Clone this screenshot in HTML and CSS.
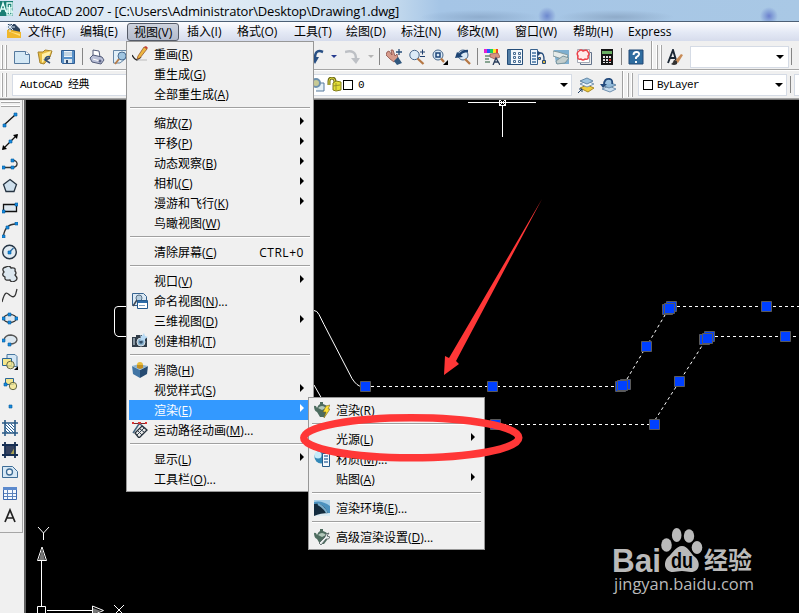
FILE: index.html
```html
<!DOCTYPE html>
<html lang="zh-CN">
<head>
<meta charset="utf-8">
<title>AutoCAD 2007</title>
<link rel="stylesheet" href="styles.css">
</head>
<body>
<div class="app">
  <header class="titlebar">
    <svg class="logo" width="14" height="16" viewBox="0 0 14 16"><path fill="#1a7f74" d="M0 0h13v15H0z"/><path d="M0 11 3 2l3 9M1 8h4M7 2h5v5H7zM7 9h5v5H7zM9.500 4v9M6 11h7" fill="none" stroke="#e6fffa" stroke-width="1.300"/></svg>
    <span class="title">AutoCAD 2007 - [C:\Users\Administrator\Desktop\Drawing1.dwg]</span>
  </header>
  <nav class="menubar">
    <svg class="doc" width="16" height="17" viewBox="0 0 16 17"><path d="M2 1h7l5 5v7H2z" fill="#2d4460"/><path d="M1 6 15 9v6L1 15z" fill="#f0b72c"/><path d="m2 8 12 3v2z" fill="#ffe07a"/><path d="M4 0v9M0 4h9M1 1l6 6M7 1 1 7" stroke="#dceaf8" fill="none"/></svg>
    <span>文件(F)</span><span>编辑(E)</span><span class="open">视图(V)</span><span>插入(I)</span><span>格式(O)</span><span>工具(T)</span><span>绘图(D)</span><span>标注(N)</span><span>修改(M)</span><span>窗口(W)</span><span>帮助(H)</span><span>Express</span>
  </nav>

  <div class="row standard">
    <div class="bar bar-main">
      <i class="grip"></i>
      <svg class="ic" viewBox="0 0 16 16"><path d="M.5 2.500h11l4 3v9H.5z" fill="#d4e8f5" stroke="#55799d"/><path d="m11.500 2.500 0 3h4" fill="#fff" stroke="#55799d"/></svg>
      <svg class="ic" viewBox="0 0 16 16"><path d="m1 3 5 0 2-2 7 1-2 6-6 7-4-1z" fill="#e7bd43" stroke="#a8842d"/><path d="m5 5 9-3-2 5-7 7z" fill="#fff0a8"/><path d="M8 11c0-3 3-4 5-3M13 14l-5-3 5-2" fill="none" stroke="#314f7a" stroke-width="1.500"/></svg>
      <svg class="ic" viewBox="0 0 16 16"><path d="M1.500 1.500h13v13h-12l-1-1z" fill="#5790c8" stroke="#315d91"/><path d="M4 2h8v6H4z" fill="#eef6fb"/><path d="M4 4h8M4 6h8" stroke="#9ab5cc"/><path d="M4 10h8v4H4z" fill="#dce7ef"/><path d="M6 11h2v3H6z" fill="#304c70"/></svg>
      <i class="sep"></i>
      <svg class="ic" viewBox="0 0 16 16"><path d="m4 1 6 1 1 6-7 1z" fill="#fff" stroke="#525b79"/><path d="m1 9 3-3 9 2 2 3-3 4-9-2z" fill="#b9bfd6" stroke="#525b79"/><path d="m4 10 7 2" stroke="#fff"/><circle cx="11" cy="12" r="1.500" fill="#5b6387"/></svg>
      <svg class="ic" viewBox="0 0 16 16"><path d="M1.500 1.500H15v7L8 14H1.500z" fill="#e2f0f8" stroke="#6787a7"/><circle cx="10" cy="7" r="4" fill="#9fc5e1" stroke="#4a6c91"/><path d="m7 10-4 5" stroke="#b77d4a" stroke-width="2"/></svg>
      <i class="covered"></i>
      <svg class="ic" viewBox="0 0 16 16"><path d="M15 3Q6-1 7 12" fill="none" stroke="#284f83" stroke-width="2.500"/><path d="M3 8h8l-4 7z" fill="#284f83"/></svg>
      <i class="drop navy"></i>
      <svg class="ic" viewBox="0 0 16 16"><path d="M0 3q11-3 11 7" fill="none" stroke="#bdc0c5" stroke-width="2.500"/><path d="m6 9 9 0-4 6z" fill="#bdc0c5"/></svg>
      <i class="drop faded"></i>
      <i class="sep"></i>
      <svg class="ic" viewBox="0 0 16 16"><path d="m1 3 2-1 3 4-1-5 2 0 2 6 2-2 1 5-4 3-4-3-4-4z" fill="#d79b8b" stroke="#8d5149" stroke-width=".8"/><path d="m8 12 4-4 4 6-5 2z" fill="#30577d"/><path d="M10 3h6M13 0v6" stroke="#284e78" stroke-width="1.300"/></svg>
      <svg class="ic" viewBox="0 0 16 16"><circle cx="5.500" cy="6" r="4.700" fill="#dbebf7" stroke="#456589"/><path d="m8.500 9.500 6 5.500" stroke="#b57745" stroke-width="2.300"/><path d="M11 3h5M13.500.5v5M11 7.500h5" stroke="#1f3f6d"/></svg>
      <svg class="ic" viewBox="0 0 16 16"><circle cx="6" cy="6" r="5" fill="#dbebf7" stroke="#456589"/><path d="M4 4h4v4H4z" fill="none" stroke="#1e4579" stroke-width="1.500"/><path d="m9 9.500 3 3.500" stroke="#b57745" stroke-width="2.300"/><path d="M16 11v5h-5z"/></svg>
      <svg class="ic" viewBox="0 0 16 16"><circle cx="8" cy="6" r="5" fill="#dbebf7" stroke="#456589"/><path d="m10 10 5 5" stroke="#b57745" stroke-width="2.300"/><path d="M4 7q2-5 9-5" fill="none" stroke="#1d4474" stroke-width="2.500"/><path d="m0 9 2-6 6 5z" fill="#1d4474"/></svg>
      <i class="sep"></i>
      <svg class="ic" viewBox="0 0 16 16"><path fill="#e720d1" d="M0 0h3v4H0z"/><path fill="#235bff" d="M3 0h3v4H3z"/><path fill="#18cc63" d="M6 0h3v4H6z"/><path fill="#ffe726" d="M9 0h3v4H9z"/><path fill="#f34024" d="M12 0h2v4h-2z"/><path d="m6 5 8-1 2 4-5 2-5-2z" fill="#d89383" stroke="#8d514b" stroke-width=".7"/><path d="M1 7h5M1 10h4M1 13h5" stroke="#648b72" stroke-width="1.500"/><path d="m9 16 3-7 4 7M10 13h4" fill="none" stroke="#283c5b" stroke-width="1.300"/></svg>
      <svg class="ic" viewBox="0 0 16 16"><path d="M.5.500h15v15H.5z" fill="#f3f8fc" stroke="#244d78"/><path d="M1 1h3v14H1z" fill="#527da4"/><path d="M6.500 3.500h2v2h-2zM11.500 3.500h2v2h-2zM6.500 7.500h2v2h-2zM11.500 7.500h2v2h-2zM6.500 11.500h2v2h-2zM11.500 11.500h2v2h-2z" fill="none" stroke="#466b91"/></svg>
      <svg class="ic" viewBox="0 0 16 16"><path d="M.5.500h7v15h-7z" fill="#eef6fc" stroke="#3a638e"/><path d="M2 4h4M2 7h4M2 10h4M2 13h4" stroke="#4272a1" stroke-width="1.500"/><path d="M7 4h4q3 0 3 7" fill="none" stroke="#274e7d" stroke-width="1.300"/><path d="M8 2v5l3-3z" fill="#264a76"/><path d="M12.500 11.500h3v3h-3zM8.500 8.500h2v2h-2z" fill="#dbb646" stroke="#264a76"/></svg>
      <svg class="ic" viewBox="0 0 16 16"><path d="M1 1h15v14H3z" fill="#7eafd0"/><path d="m0 2 5 1 10 3-1 3-5 1-9-3z" fill="#e6ebe9" stroke="#83999f"/><path d="m3 12 7-5 6 2-4 5-8 1z" fill="#c3cecd" stroke="#7c969e"/></svg>
      <svg class="ic" viewBox="0 0 16 16"><path d="M4.500 3.500h11v12h-11z" fill="#eee" stroke="#62728a"/><path d="M1.500.500h12v13h-12z" fill="#fff" stroke="#a2a9b5"/><path d="M3 2q2-2 4 0 4-2 5 1 2 2 0 4 1 4-3 3-2 2-4 0-4 1-3-3-2-3 1-5z" fill="#ffeaea" stroke="#ed4048" stroke-width="1.500"/></svg>
      <svg class="ic" viewBox="0 0 16 16"><path d="M2 0h12v16H2z" fill="#141414"/><path d="M3 2h10v3H3z" fill="#69ad62"/><path d="M4 7h2v2H4zM7 7h2v2H7zM10 7h2v2h-2zM4 10h2v2H4zM7 10h2v2H7zM4 13h2v1H4zM7 13h2v1H7zM10 13h2v1h-2z" fill="#e4e4e4"/><path d="M10 10h2v2h-2z" fill="#d13a35"/></svg>
      <i class="sep"></i>
      <svg class="ic" viewBox="0 0 16 16"><path d="M1 1h14v14H1z" fill="#2f6da0" stroke="#234875"/><path d="M5.500 6q0-3 3-3 3 0 2.500 2.500-.3 1.300-3 3v1.500M8 12v2" fill="none" stroke="#fff" stroke-width="1.900"/></svg>
    </div>
    <div class="bar bar-style">
      <i class="grip"></i>
      <svg class="ic" viewBox="0 0 16 16"><path d="M1 14 6 1l3 10M3 9h6" fill="none" stroke="#1c2835" stroke-width="1.900"/><path d="m8 12 6-7 2 1-5 8z" fill="#c88b56"/><path d="M7 11q4 0 3 4-3 2-6 0 2-1 3-4z" fill="#333"/></svg>
      <div class="combo style-combo"><i class="drop"></i></div>
      <i class="sep"></i>
    </div>
  </div>

  <div class="row layers">
    <div class="bar bar-layers">
      <i class="grip"></i>
      <div class="combo space-combo">AutoCAD 经典</div>
      <div class="combo layer-combo">
        <svg width="14" height="14" viewBox="0 0 14 14"><path d="M7 5h6v8H5" fill="#e5f0f6" stroke="#54799d"/><circle cx="5" cy="5" r="4" fill="#c7c995" stroke="#6d91ae" stroke-width="2"/></svg>
        <svg width="15" height="15" viewBox="0 0 15 15"><path d="M2 8V4q0-3 3-3 3 0 3 4v2" fill="none" stroke="#716d1a" stroke-width="3"/><path d="M2 8V4q0-3 3-3 3 0 3 4v2" fill="none" stroke="#dcda42"/><path d="m6 6 3-2 5 1v8l-5 1-3-1z" fill="#e2dd36" stroke="#817b19"/><path d="M9 6v7M6 9l7-1" stroke="#9c9528"/></svg>
        <i class="swatch"></i><span>0</span><i class="drop"></i>
      </div>
      <svg class="ic" viewBox="0 0 16 16"><path d="m2 11 7-3 7 3-6 4z" fill="#efcc3c" stroke="#a88824"/><path d="m2 7 7-3 7 3-7 3z" fill="#eef6fa" stroke="#7895b0"/><path d="m2 4 7-3 6 3-6 3z" fill="#9bc3df" stroke="#6588a7"/><path d="m0 16 4-4M1 12h3v3" stroke="#1f3e65" fill="none"/></svg>
      <svg class="ic" viewBox="0 0 16 16"><path d="m2 12 7-3 7 3-6 3z" fill="#c7dced" stroke="#6e8fae"/><path d="m2 8 7-3 7 3-7 3z" fill="#8fb8d8" stroke="#6588a7"/><path d="M4 8q0-7 6-6 3 1 2 5" fill="#9dc3e0" stroke="#244b7c" stroke-width="1.800"/><path d="M0 7h7l-4 4z" fill="#244b7c"/></svg>
    </div>
    <div class="bar bar-props">
      <i class="grip"></i>
      <div class="combo color-combo"><i class="swatch"></i><span>ByLayer</span><i class="drop"></i></div>
      <i class="sep"></i>
      <div class="combo next-combo"></div>
    </div>
  </div>

  <main class="workspace">
    <aside class="side">
      <div class="draw">
        <i class="hgrip"></i>
        <svg viewBox="0 0 16 16"><path d="M2 13 13 3" stroke="#111" stroke-width="1.300"/><path class="n" d="M1 12h3v3H1zM12 1h3v3h-3z"/></svg>
        <svg viewBox="0 0 16 16"><path d="M1 15 15 1" stroke="#111" stroke-width="1.300"/><path d="m0 16 1-5 4 4zM16 0l-5 1 4 4z"/><path class="n" d="M7 6h3v3H7z"/></svg>
        <svg viewBox="0 0 16 16"><path d="M1 11.500h9M10 4.500c6-1 7 6 1 7" fill="none" stroke="#333" stroke-width="1.300"/><path class="n" d="M0 10h3v3H0zM9 10h3v3H9zM9 3h3v3H9z"/></svg>
        <svg viewBox="0 0 16 16"><path d="m8 1.500 6.500 5-2.500 7H4l-2.500-7z" fill="#cfe0ed" stroke="#263442" stroke-width="1.300"/></svg>
        <svg viewBox="0 0 16 16"><path d="M1.500 4.500h13v7h-13z" fill="#dce7ef" stroke="#111" stroke-width="1.300"/><path class="n" d="M0 10h3v3H0zM13 3h3v3h-3z"/></svg>
        <svg viewBox="0 0 16 16"><path d="M1.500 14Q3 2 14 2" fill="none" stroke="#333" stroke-width="1.300"/><path class="n" d="M0 13h3v3H0zM4 4h3v3H4zM13 0h3v3h-3z"/></svg>
        <svg viewBox="0 0 16 16"><circle cx="7.500" cy="8" r="6.800" fill="#e1ebf2" stroke="#253545" stroke-width="1.400"/><path d="m7.500 8 4-4" stroke="#28689e" stroke-width="1.200"/><path class="n" d="M6 7h3v3H6z"/></svg>
        <svg viewBox="0 0 16 16"><path d="M2 6Q-1 2 4 1q4-2 5 1 5-1 4 3 2 2 0 4 4 4 0 6-4 2-5-1-6 1-5-3-4-2-1-5z" fill="#dce7ef" stroke="#333" stroke-width="1.300"/></svg>
        <svg viewBox="0 0 16 16"><path d="M0 14C4-1 6 7 9 8c5 3 5-4 6-7" fill="none" stroke="#333" stroke-width="1.300"/></svg>
        <svg viewBox="0 0 16 16"><ellipse cx="8" cy="8.500" rx="6.500" ry="4" fill="#dce7ef" stroke="#333" stroke-width="1.200"/><path class="n" d="M0 7h3v3H0zM6 3h3v3H6zM13 7h3v3h-3zM6 11h3v3H6z"/></svg>
        <svg viewBox="0 0 16 16"><path d="M2 8q1-5 7-5 6 1 6 5-1 4-7 4" fill="#dce7ef" stroke="#555" stroke-width="1.300"/><path class="n" d="M0 7h3v3H0zM6 11h3v3H6z"/></svg>
        <svg viewBox="0 0 16 16"><path d="M5 .5h8l2 2v10H5z" fill="#d3e6f4" stroke="#49779f"/><path d="M.5 4.500h9v7h-9z" fill="#f4e68b" stroke="#286598"/><circle cx="8.500" cy="11" r="3.800" fill="#f4e68b" fill-opacity=".8" stroke="#626744"/><path d="M16 12v4h-4z"/></svg>
        <svg viewBox="0 0 16 16"><path d="M3.500 2.500h8v6h-8z" fill="#f4e68b" stroke="#286598"/><circle cx="11" cy="10" r="3.700" fill="#f4e68b" fill-opacity=".8" stroke="#626744"/><path class="n" d="M2 7h3v3H2z"/></svg>
        <svg viewBox="0 0 16 16"><path class="n" d="M7 7h3v3H7z"/></svg>
        <svg viewBox="0 0 16 16"><path d="M3 4h9v9H3z" fill="#fff"/><path d="m3 4 9 9M6 4l6 6M3 7l6 6M9 4l3 3M3 10l3 3" stroke="#2a659a"/><path d="M3 0v16M13 0v16M0 3h16M0 13h16" stroke="#285a87" stroke-width="1.600"/></svg>
        <svg viewBox="0 0 16 16"><path d="M3 3h10v10H3z" fill="#34415e"/><path d="M8 13 13 5v8z" fill="#a7a051"/><path d="M3 0v16M13 0v16M0 3h16M0 13h16" stroke="#162e52" stroke-width="1.800"/></svg>
        <svg viewBox="0 0 16 16"><path d="M.5 2.500h10l5 5v6H.5z" fill="#d7e8f5" stroke="#3d6c96"/><circle cx="7.500" cy="8" r="3" fill="#f1f5f8" stroke="#3d6c96" stroke-width="1.300"/></svg>
        <svg viewBox="0 0 16 16"><path d="M1.500 1.500h13v12h-13z" fill="#f5f9fe" stroke="#3d69ae"/><path d="M1 1h14v3H1z" fill="#5c8acd"/><path d="M5.500 4v9M10.500 4v9M2 7.500h12M2 10.500h12" stroke="#5c83bd"/></svg>
        <svg viewBox="0 0 16 16"><path d="m3 14 5-12 5 12M5 10h6" fill="none" stroke="#222" stroke-width="1.700"/></svg>
      </div>
    </aside>
    <svg class="canvas" width="773" height="513" viewBox="26 100 773 513">
      <g class="wire">
        <path d="M468 102.500h68M502.500 106v31M499.500 99.500h6v6h-6zM500 100l5 5M505 100l-5 5" shape-rendering="crispEdges"/>
        <path d="M130 306.500h-12q-3.500 0-3.500 3.500v22q0 3.500 3.500 4.500h12M314 310.500q3 0 5 4l5 10 28 54q5 8 10 8M314 385l8 14"/>
        <path d="m38 527 5.500 6 5.500-6M43.500 533v7M41.500 606v-46M47 610.500h45M37.500 606.500h8v8h-8zM37.500 560.500h9L42 547zM92.500 606v9l11-4.500zM114 605l10 10M124 605l-10 10"/>
        <path d="M39 560 42 548l3 12zM93 608v6l8-3z" fill="#777" stroke="none"/>
      </g>
      <g class="wire dashed">
        <path d="M371 386.500h245M497 424.500h152M677 306.500h122M715 336.500h84"/>
        <path d="m627 379 41-69M655 420l52-82"/>
      </g>
      <g class="grips">
        <path d="M360.500 381.500h10v10h-10zM487.500 381.500h10v10h-10zM490.500 419.500h10v10h-10zM641.500 341.500h10v10h-10zM761.500 301.500h10v10h-10zM780.500 331.500h10v10h-10zM674.500 376.500h10v10h-10zM649.500 419.500h10v10h-10z"/>
        <path d="M666.500 301.500h10v10h-10z"/><path d="M662.500 304.500h10v10h-10z"/><path d="M664.500 303.500h10v10h-10z"/>
        <path d="M704.500 331.500h10v10h-10z"/><path d="M699.500 334.500h10v10h-10z"/><path d="M702.500 333.500h10v10h-10z"/>
        <path d="M620.500 379.500h10v10h-10z"/><path d="M615.500 381.500h10v10h-10z"/><path d="M617.500 380.500h10v10h-10z"/>
      </g>
      <g class="mark">
        <text class="bai" x="612" y="571.500" textLength="49" lengthAdjust="spacingAndGlyphs">Bai</text>
        <ellipse cx="666.500" cy="545" rx="5.300" ry="6.800"/><ellipse cx="676.700" cy="535" rx="4.800" ry="7"/><ellipse cx="689" cy="536" rx="5.200" ry="6.800"/><ellipse cx="697" cy="547.500" rx="5.300" ry="6.500"/>
        <path d="M682 546c6 0 8 7 13 11 6 5 5 15-4 15-4 0-5-1-9-1s-6 1-9 1c-9 0-10-10-5-15 5-4 8-11 14-11z"/>
        <text class="du" x="671" y="568" textLength="22" lengthAdjust="spacingAndGlyphs">du</text>
        <text class="jy" x="704" y="569">经验</text>
        <text class="url" x="614" y="590" textLength="140" lengthAdjust="spacingAndGlyphs">jingyan.baidu.com</text>
      </g>
    </svg>
  </main>

  <div class="menu view-menu">
    <div class="item"><svg viewBox="0 0 16 16"><path d="M0 9q3 5 5 5l4-3" fill="none" stroke="#222" stroke-width="1.400"/><path d="M5 14h10" stroke="#bbb"/><path d="m6 10 6-9 3 2-7 9-3 1z" fill="#edb641" stroke="#8a4b22" stroke-width=".7"/><path d="m12 1 2-1 2 2-1 1z" fill="#c43c2e"/></svg>重画(<u>R</u>)</div>
    <div class="item">重生成(<u>G</u>)</div>
    <div class="item">全部重生成(<u>A</u>)</div>
    <hr>
    <div class="item sub">缩放(<u>Z</u>)</div>
    <div class="item sub">平移(<u>P</u>)</div>
    <div class="item sub">动态观察(<u>B</u>)</div>
    <div class="item sub">相机(<u>C</u>)</div>
    <div class="item sub">漫游和飞行(<u>K</u>)</div>
    <div class="item">鸟瞰视图(<u>W</u>)</div>
    <hr>
    <div class="item">清除屏幕(<u>C</u>)<kbd>CTRL+0</kbd></div>
    <hr>
    <div class="item sub">视口(<u>V</u>)</div>
    <div class="item"><svg viewBox="0 0 16 16"><path d="M.5.500h11l3 3v9H.5z" fill="#dceaf5" stroke="#37638f"/><circle cx="7" cy="5" r="3" fill="#b7cedf" stroke="#597188"/><path d="m5 7-4 6" stroke="#3e4754" stroke-width="1.500"/><path d="M5.500 7.500h10v8h-10z" fill="#fff" stroke="#24598d"/><path d="M6 8h9v2H6z" fill="#2e6ca8"/><path d="M7 12.500h6" stroke="#7da2c5"/></svg>命名视图(<u>N</u>)...</div>
    <div class="item sub">三维视图(<u>D</u>)</div>
    <div class="item"><svg viewBox="0 0 16 16"><path d="M0 4h4V2h6v2h5v10H0z" fill="#303c48"/><path d="M1 5h2v7H1z" fill="#8896a1"/><circle cx="9" cy="9" r="4" fill="#8ab3d0" stroke="#d5dee4"/><circle cx="9" cy="9" r="1.800" fill="#35516c"/><path d="m8 2 2 1 2-3 1 3 3 1-3 2v3l-2-2-3 1 1-3z" fill="#b8daf4"/></svg>创建相机(<u>T</u>)</div>
    <hr>
    <div class="item"><svg viewBox="0 0 16 16"><path d="m0 4 8 4v8l-7-4z" fill="#4174a4"/><path d="m8 8 8-4-1 8-7 4z" fill="#264b72"/><path d="m0 4 7-2 9 2-8 4z" fill="#91b5cf"/><circle cx="8" cy="3" r="3" fill="#e8bd3b"/><path d="M5 3h6v3l-3 1-3-1z" fill="#c18e24"/></svg>消隐(<u>H</u>)</div>
    <div class="item sub">视觉样式(<u>S</u>)</div>
    <div class="item sub active">渲染(<u>E</u>)</div>
    <div class="item"><svg viewBox="0 0 16 16"><path d="M1 1.500h13" stroke="#7f2525"/><path d="M0 0h2v2H0zM6 0h3v3H6zM13 0h2v2h-2z" fill="#d33"/><path d="m7 2-6 9M8 2l6 5" stroke="#45657f" stroke-width="1.500" fill="none"/><path d="m3 11 7-7 5 4-8 8z" fill="#e8e8e8" stroke="#26313b" stroke-width="1.300"/><path d="m5 13 7-7M6 9l4 4M8 7l4 3" stroke="#33424f"/></svg>运动路径动画(<u>M</u>)...</div>
    <hr>
    <div class="item sub">显示(<u>L</u>)</div>
    <div class="item">工具栏(<u>O</u>)...</div>
  </div>

  <div class="menu render-menu">
    <div class="item"><svg viewBox="0 0 16 16"><path d="M0 4q2-1 3 2 1-3 3-4V0h3v2q4 1 5 4l-1 5-3 4H6l-3-5Q0 9 0 4z" fill="#4d6c5f"/><path d="M4 6q4-4 8 0l-4 2z" fill="#b2c8ba"/><path d="m12 4 4-1-2 4h2l-6 9 2-6H9z" fill="#ffe235" stroke="#796414" stroke-width=".6"/></svg>渲染(<u>R</u>)</div>
    <hr>
    <div class="item sub">光源(<u>L</u>)</div>
    <div class="item"><svg viewBox="0 0 16 16"><circle cx="7" cy="6" r="6.500" fill="#3288b8"/><circle cx="4" cy="4" r="3.500" fill="#c6ecfa"/><path d="M8.500 2.500h7v13h-7z" fill="#f4f8fc" stroke="#265b8b"/><path d="M10 5h4M10 8h4M10 11h4" stroke="#4b79aa" stroke-width="1.500"/></svg>材质(<u>M</u>)...</div>
    <div class="item sub">贴图(<u>A</u>)</div>
    <hr>
    <div class="item"><svg viewBox="0 0 16 16"><path d="M0 0h16v16H0z" fill="#4c92bf"/><path d="M0 0h16v6Q8 0 0 2z" fill="#a9d0e8"/><path d="M0 4Q9 2 14 13v3H0z" fill="#132b3e"/><path d="M0 16q6-3 16-3v3z" fill="#dcebf2"/><path d="M4 4q6 3 9 9" stroke="#79adca" stroke-width="2" fill="none"/></svg>渲染环境(<u>E</u>)...</div>
    <hr>
    <div class="item"><svg viewBox="0 0 16 16"><path d="M0 4q2-1 3 2 1-3 3-4V0h3v2q4 1 5 4l-1 5-3 4H6l-3-5Q0 9 0 4z" fill="#4d6c5f"/><path d="M4 6q4-4 8 0l-4 2z" fill="#b2c8ba"/><path d="m5 14 6-6q0-4 4-4l-2 3 3 1q-1 3-4 2l-5 6z" fill="#e9eeee" stroke="#4e5a5c" stroke-width=".8"/></svg>高级渲染设置(<u>D</u>)...</div>
  </div>

  <svg class="callout" width="799" height="613" viewBox="0 0 799 613">
    <ellipse cx="411.300" cy="437.800" rx="107.500" ry="20" fill="none" stroke="#ff3737" stroke-width="7.500"/>
    <path d="M542 199 456 361l3 3-15 11 1-19 4 2z" fill="#ff3737"/>
  </svg>
</div>
</body>
</html>
```
FILE: styles.css
```css
* { box-sizing: border-box; }
body { margin: 0; overflow: hidden; }
.app {
  position: relative;
  display: flex;
  flex-direction: column;
  width: 799px;
  height: 613px;
  overflow: hidden;
  background: #f0f0f0;
  color: #000;
  font: 12px/20px "Open Sans", "Noto Sans CJK SC", sans-serif;
}
.titlebar {
  display: flex;
  align-items: center;
  gap: 5px;
  height: 22px;
  flex: none;
  border-bottom: 1px solid #4d6076;
  background:
    radial-gradient(circle at 547px 16px, #6c88ce 0, #86a2d8 4px, transparent 9px),
    radial-gradient(circle at 769px 16px, #6c80ce 0, #86a2d8 4px, transparent 9px),
    radial-gradient(ellipse 58px 7px at 616px 17px, #8fabc9, transparent),
    radial-gradient(ellipse 60px 7px at 480px 17px, #8fadce, transparent),
    linear-gradient(90deg, #d3e3f2 0, #e6eff7 180px, #c6dbee 390px, #a5c5e6 440px, #a9c8e5 799px);
}
.logo { margin-bottom: 3px; }
.title { font-size: 13px; letter-spacing: -0.21px; white-space: nowrap; }
.menubar {
  display: grid;
  grid-template-columns: 24px 52px 53px 54px 50px 57px 52px 55px 56px 58px 58px 55px 60px;
  align-items: center;
  height: 19px;
  flex: none;
  padding-left: 3px;
  background: linear-gradient(#fdfdff, #e4e9f5 55%, #d6dcec);
  line-height: 18px;
  white-space: nowrap;
}
.menubar .doc { margin-left: 3px; }
.menubar span { padding-left: 1px; }
.menubar .open {
  width: 52px;
  height: 18px;
  margin-left: -5px;
  padding-left: 6px;
  line-height: 17px;
  border: 1px solid #555b68;
  border-radius: 3px;
  background: linear-gradient(#ced3de, #b3bacb);
}
.row { display: flex; flex: none; }
.standard { height: 29px; border-bottom: 1px solid #a6a6a6; }
.layers { height: 29px; border-top: 1px solid #fff; border-bottom: 1px solid #a6a6a6; }
.bar { display: flex; align-items: center; gap: 7px; padding-left: 1px; }
.standard .bar { padding-top: 3px; }
.bar-main, .bar-layers { border-right: 1px solid #a0a0a0; }
.bar-main { width: 652px; }
.bar-style { width: 147px; padding-left: 3px; gap: 5px; border-left: 1px solid #fff; }
.grip { width: 6px; height: 24px; flex: none; border: solid #a6a6a6; border-width: 0 1px 0 0; box-shadow: inset 1px 0 #fff, inset 2px 0 #a6a6a6, inset -1px 0 #fff; }
.ic { width: 16px; height: 16px; flex: none; }
.sep { width: 1px; height: 17px; margin: 0 -1px; flex: none; background: #858585; }
.covered { width: 166px; flex: none; }
.drop { width: 0; height: 0; flex: none; border: solid transparent; border-width: 4px 4px 0; border-top-color: #000; }
.drop.navy, .drop.faded { border-width: 3px 3px 0; margin-right: 1px; border-top-color: #263b8f; }
.drop.faded { margin-right: -1px; border-top-color: #b4b4b4; }
.combo {
  display: flex;
  align-items: center;
  height: 22px;
  flex: none;
  border: 1px solid #d5dbe5;
  background: #fff;
  font: 11px/18px "Liberation Mono", "Noto Sans CJK SC", monospace;
  letter-spacing: -0.6px;
}
.combo .drop { margin-left: auto; }
.style-combo { width: 99px; margin-left: 2px; padding-right: 4px; }
.bar-style .sep { margin-left: -3px; }
.bar-layers { width: 623px; padding-left: 1px; gap: 6px; }
.space-combo { width: 205px; margin-left: -1px; padding-left: 7px; }
.layer-combo { width: 272px; margin-left: 77px; padding: 0 3px 0 10px; gap: 3px; }
.layer-combo svg + svg { margin-left: -1px; }
.layer-combo .swatch { margin: 0 2px 0 -2px; }
.swatch { width: 10px; height: 10px; flex: none; border: 1px solid #000; }
.bar-props { width: 176px; border-left: 1px solid #fff; padding-left: 3px; gap: 4px; }
.color-combo { width: 149px; margin-left: 1px; padding: 0 3px 0 4px; gap: 4px; }
.next-combo { width: 12px; }
.workspace { display: flex; flex: 1; min-height: 0; border-top: 1px solid #777; }
.side { width: 26px; flex: none; border-right: 2px solid #606060; }
.draw { display: flex; flex-direction: column; gap: 6px; width: 23px; height: 433px; padding: 0 0 0 2px; border: solid #a6a6a6; border-width: 0 1px 1px 0; }
.draw svg { width: 16px; height: 16px; flex: none; }
.n { fill: #168be0; stroke: #075a9b; stroke-width: .6; }
.hgrip { width: 19px; height: 6px; margin: 1px 0 -1px -1px; flex: none; border-bottom: 1px solid #a6a6a6; box-shadow: inset 0 1px #fff, inset 0 2px #a6a6a6, inset 0 -1px #fff; }
.canvas { display: block; flex: none; background: #000; }
.wire { fill: none; stroke: #fff; stroke-width: 1; }
.dashed { stroke-dasharray: 3 3; }
.grips { fill: #0040ff; stroke: #5a5a5a; }
.mark { fill: #bababa; }
.bai { font: bold 33px "Liberation Sans", sans-serif; }
.du { font: bold 22px "Liberation Sans", sans-serif; fill: #000; }
.jy { font: bold 24px "Noto Sans CJK SC", sans-serif; }
.url { font: 17px "Open Sans", sans-serif; }
.menu { position: absolute; padding: 2px; border: 1px solid #979797; background: #f0f0f0; white-space: nowrap; }
.view-menu { left: 126px; top: 41px; width: 188px; height: 451px; }
.render-menu { left: 308px; top: 397px; width: 177px; height: 153px; }
.item { position: relative; display: flex; height: 20px; padding-left: 25px; line-height: 21px; }
.item svg { position: absolute; left: 3px; top: 2px; width: 16px; height: 16px; }
.item u { text-underline-offset: 1px; }
.item kbd { margin-left: auto; padding-right: 7px; font: inherit; letter-spacing: .55px; }
.sub::after { content: ""; margin: 4px 7px 0 auto; width: 0; height: 0; border: solid transparent; border-width: 4px 0 4px 4px; border-left-color: #000; }
.active { margin-right: 2px; background: #3399ff; color: #fff; }
.active::after { margin-right: 5px; border-left-color: #fff; }
.menu hr { height: 2px; margin: 3px 1px 4px; border: 0; border-top: 1px solid #a0a0a0; border-bottom: 1px solid #fff; }
.callout { position: absolute; left: 0; top: 0; pointer-events: none; }
```
